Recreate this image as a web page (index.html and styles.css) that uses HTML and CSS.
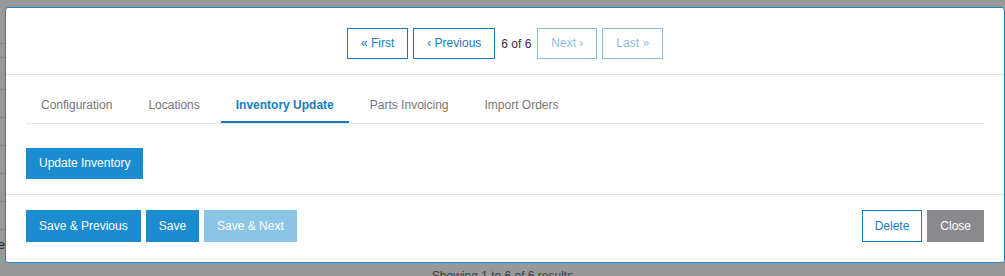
FILE: index.html
```html
<!DOCTYPE html>
<html lang="en">
<head>
  <meta charset="UTF-8" />
  <meta name="viewport" content="width=device-width, initial-scale=1.0" />
  <title>Dealer Settings</title>
  <link rel="stylesheet" href="styles.css">
</head>
<body>
  <div class="page">
    <div class="topbar"></div>
    <div class="grid">
      <div class="grid-head"></div>
      <div class="grid-row first"></div>
      <div class="grid-row"></div>
      <div class="grid-row"></div>
      <div class="grid-row"></div>
      <div class="grid-row"></div>
      <div class="grid-row"></div>
      <div class="grid-row last"><span class="lead">Active</span></div>
    </div>
    <p class="results">Showing 1 to 6 of 6 results</p>
  </div>

  <div class="backdrop"></div>

  <div class="modal">
    <div class="modal-header">
      <nav class="pager">
        <button class="pager-btn">&laquo; First</button>
        <button class="pager-btn">&lsaquo; Previous</button>
        <span class="pager-count">6 of 6</span>
        <button class="pager-btn" disabled>Next &rsaquo;</button>
        <button class="pager-btn" disabled>Last &raquo;</button>
      </nav>
    </div>

    <div class="modal-body">
      <ul class="tabs">
        <li><a href="#">Configuration</a></li>
        <li><a href="#">Locations</a></li>
        <li><a href="#" class="active">Inventory Update</a></li>
        <li><a href="#">Parts Invoicing</a></li>
        <li><a href="#">Import Orders</a></li>
      </ul>
      <div class="tab-pane">
        <button class="btn btn-primary">Update Inventory</button>
      </div>
    </div>

    <div class="modal-footer">
      <div class="btn-group">
        <button class="btn btn-primary">Save &amp; Previous</button>
        <button class="btn btn-primary">Save</button>
        <button class="btn btn-primary" disabled>Save &amp; Next</button>
      </div>
      <div class="btn-group">
        <button class="btn btn-outline">Delete</button>
        <button class="btn btn-muted">Close</button>
      </div>
    </div>
  </div>
</body>
</html>
```

FILE: styles.css
```css
body {
  margin: 0;
  background: #fff;
  color: #333;
  font-family: 'Liberation Sans', Arial, sans-serif;
  font-size: 12px;
  overflow: hidden;
}

/* page behind the dialog */
.topbar {
  height: 43px;
  border-bottom: 1px solid #ddd;
}

.grid-head {
  height: 13px;
  border-bottom: 1px solid #ddd;
}

.grid-row {
  box-sizing: border-box;
  height: 28px;
  border-bottom: 1px solid #ddd;
  display: flex;
  align-items: center;
  padding-left: 5px;
}

.grid-row.first {
  height: 32px;
}

.grid-row.last {
  border-bottom: none;
}

.lead {
  width: 0;
  display: flex;
  justify-content: flex-end;
  white-space: nowrap;
  font-size: 13px;
  color: #333;
}

.results {
  margin: 10px 0 0;
  text-align: center;
  line-height: 17px;
  color: #666;
}

.backdrop {
  position: fixed;
  inset: 0;
  background: rgba(0, 0, 0, 0.4);
}

/* dialog */
.modal {
  position: absolute;
  top: 7px;
  left: 5px;
  width: 1000px;
  box-sizing: border-box;
  background: #fff;
  border: 1px solid #1a86c8;
  border-radius: 3px;
}

.modal-header {
  padding: 20px 20px 15px;
  border-bottom: 1px solid #e5e5e5;
}

.pager {
  display: flex;
  justify-content: center;
  align-items: center;
  gap: 5px;
}

.pager-count {
  margin: 0 1px;
  color: #333;
}

button {
  font-family: inherit;
  font-size: 12px;
  line-height: 17px;
  cursor: pointer;
}

.pager-btn {
  padding: 6px 13px;
  background: #fff;
  border: 1px solid #1a7bbd;
  border-radius: 0;
  color: #1a7bbd;
}

.pager-btn:disabled {
  opacity: 0.5;
  cursor: default;
}

.modal-body {
  padding: 12px 20px 15px;
}

.tabs {
  display: flex;
  gap: 6px;
  list-style: none;
  margin: 0;
  padding: 0;
  border-bottom: 1px solid #e5e5e5;
}

.tabs a {
  display: block;
  padding: 10px 15px 7px;
  line-height: 17px;
  border-bottom: 2px solid transparent;
  color: #777;
  text-decoration: none;
}

.tabs a.active {
  color: #1a7bbd;
  font-weight: bold;
  border-bottom-color: #1a7bbd;
}

.tab-pane {
  padding-top: 24px;
}

.btn {
  padding: 6px 12px;
  border: 1px solid transparent;
  border-radius: 0;
  color: #fff;
}

.btn-primary {
  background: #1a8ccf;
  border-color: #1a8ccf;
}

.btn-primary:disabled {
  opacity: 0.5;
  cursor: default;
}

.btn-outline {
  background: #fff;
  border-color: #1a7bbd;
  color: #1a7bbd;
}

.btn-muted {
  background: #8a8a8e;
  border-color: #8a8a8e;
}

.modal-footer {
  display: flex;
  justify-content: space-between;
  padding: 15px 20px 20px;
  border-top: 1px solid #e5e5e5;
}

.modal-footer .btn {
  padding-top: 7px;
}

.btn-group {
  display: flex;
  gap: 5px;
}
```
